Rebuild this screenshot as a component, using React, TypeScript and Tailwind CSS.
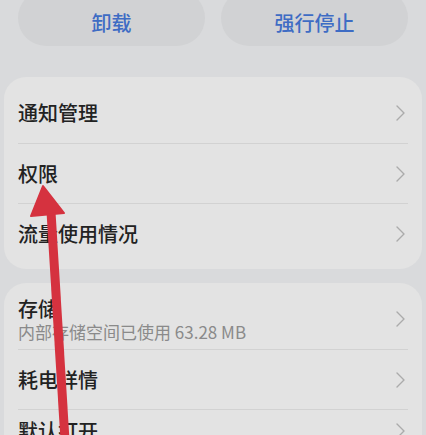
type Row = { title: string; sub?: string; h?: string };

const groupOne: Row[] = [{ title: "通知管理" }, { title: "权限" }, { title: "流量使用情况" }];
const groupTwo: Row[] = [
  { title: "存储", sub: "内部存储空间已使用 63.28 MB" },
  { title: "耗电详情" },
  { title: "默认打开", h: "h-[42px]" },
];

function Chevron() {
  return (
    <svg width="9" height="16" viewBox="0 0 9 16" className="mr-[3px]">
      <polyline points="1,1 8,8 1,15" fill="none" stroke="#ababab" strokeWidth="1.4" strokeLinecap="round" strokeLinejoin="round" />
    </svg>
  );
}

function SettingRow({ row, first }: { row: Row; first: boolean }) {
  return (
    <div className={"flex items-center pr-[14px] " + (row.h ?? "h-[60px]")}>
      <div
        className={
          "flex h-full flex-1 items-center justify-between " +
          (first ? "" : "border-t border-[#d2d2d2]")
        }
      >
        <div className="flex flex-col">
          <span className="text-[20px] font-medium leading-[26px] text-[#222]">{row.title}</span>
          {row.sub && (
            <span className="text-[17px] leading-[20px] text-[#8a8a8a]">{row.sub}</span>
          )}
        </div>
        <Chevron />
      </div>
    </div>
  );
}

function Card({ rows }: { rows: Row[] }) {
  return (
    <div className="mx-[4px] rounded-[22px] bg-[#e3e3e3] py-[6px] pl-[14px]">
      {rows.map((r, i) => (
        <SettingRow key={r.title} row={r} first={i === 0} />
      ))}
    </div>
  );
}

export default function App() {
  return (
    <div
      className="relative h-[435px] w-[426px] overflow-hidden bg-[#d9dadc]"
      style={{ fontFamily: '"Noto Sans CJK SC", "Noto Sans", sans-serif' }}
    >
      <div className="-mt-[10px] flex gap-4 px-[18px]">
        {["卸载", "强行停止"].map((t) => (
          <div
            key={t}
            className="flex h-[56px] flex-1 items-center justify-center rounded-full bg-[#d1d2d4] pt-[10px] text-[20px] font-medium text-[#3e6cc4]"
          >
            {t}
          </div>
        ))}
      </div>

      <div className="mt-[31px]">
        <Card rows={groupOne} />
      </div>
      <div className="mt-[14px]">
        <Card rows={groupTwo} />
      </div>

      {/* red arrow drawn over the screenshot */}
      <svg className="pointer-events-none absolute left-0 top-0" width="426" height="435" viewBox="0 0 426 435">
        <line x1="51" y1="212" x2="65" y2="440" stroke="#d5323f" strokeWidth="9" />
        <polygon points="43,186 31,216 64,213" fill="#d5323f" stroke="#d5323f" strokeWidth="2" strokeLinejoin="round" />
      </svg>
    </div>
  );
}
